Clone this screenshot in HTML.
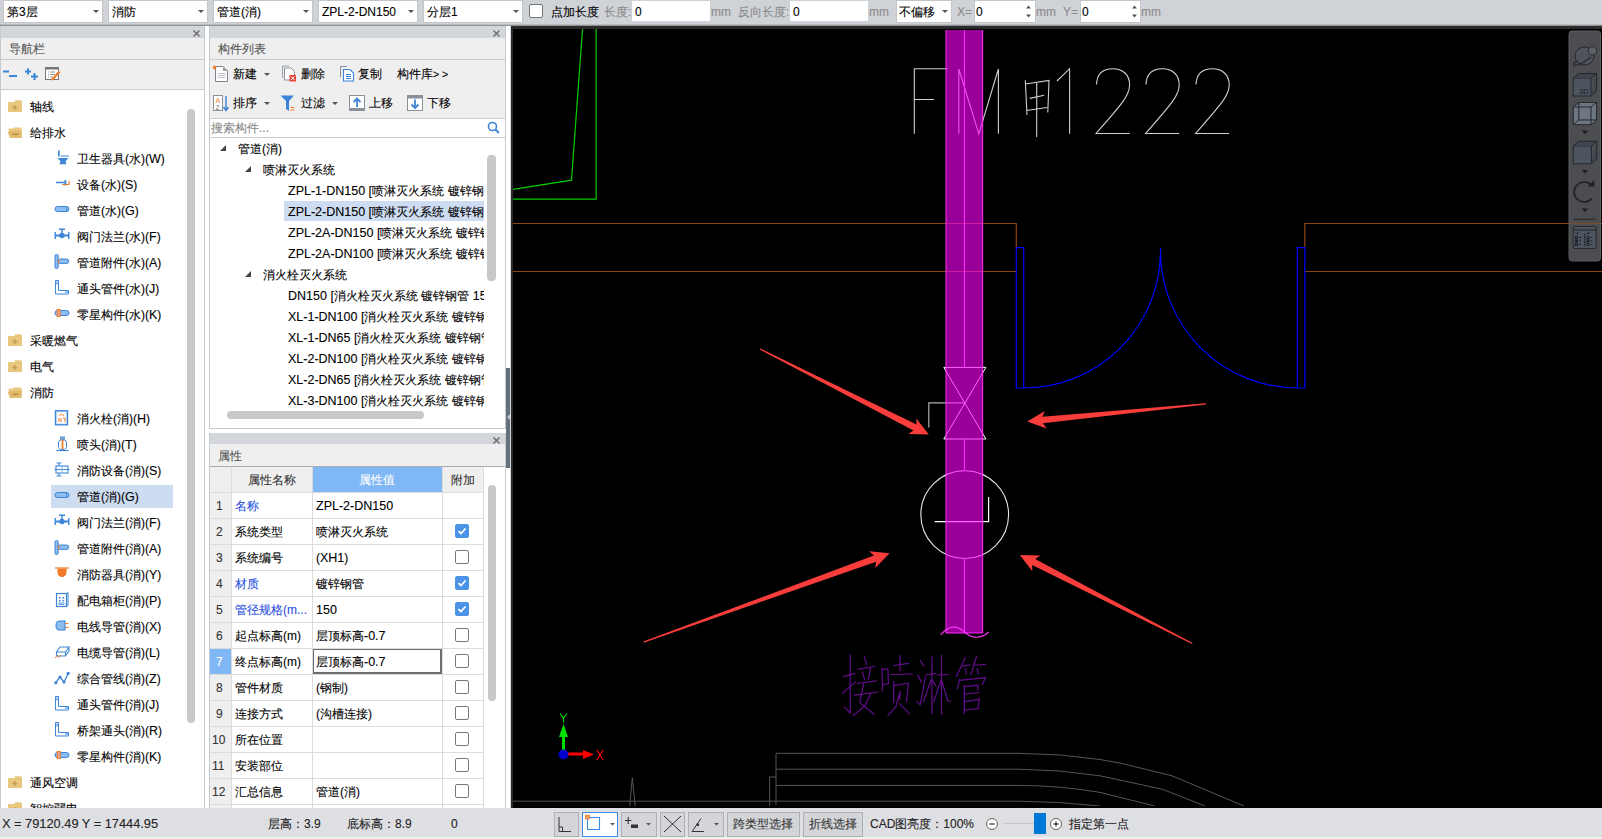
<!DOCTYPE html>
<html><head><meta charset="utf-8">
<style>
*{box-sizing:border-box}
html,body{margin:0;padding:0;width:1602px;height:839px;overflow:hidden;background:#cfd2d7;font-family:"Liberation Sans",sans-serif;font-size:12px;color:#000}
.t,.cb span{-webkit-text-stroke:0.1px currentColor}
.a{position:absolute}
.a svg{display:block}
.t{position:absolute;white-space:nowrap;line-height:14px}
.cb{position:absolute;background:#fff;border:1px solid #c4c6ca;height:23px;top:0}
.cb span{position:absolute;left:3px;top:4px;line-height:14px;white-space:nowrap}
.cb i{position:absolute;right:3px;top:9px;width:0;height:0;border-left:3px solid transparent;border-right:3px solid transparent;border-top:3px solid #555}
.g{color:#8a8a8a}
.l{font-size:12.5px}
.chk{position:absolute;width:14px;height:14px;border:1px solid #6d6d6d;border-radius:2px;background:#fff}
.chk.on{background:#4a93e6;border-color:#4a93e6}
.btn{position:absolute;border:1px solid #a9abae;background:#d0d1d4;top:812px;height:25px}
</style></head><body>

<div class="a" style="left:0;top:24px;width:1602px;height:1px;background:#b9bcc0"></div><div class="a" style="left:0;top:25px;width:1602px;height:1px;background:#8f9297"></div>
<div class="cb" style="left:3px;width:100px"><span>第3层</span><i></i></div>
<div class="cb" style="left:108px;width:100px"><span>消防</span><i></i></div>
<div class="cb" style="left:213px;width:100px"><span>管道(消)</span><i></i></div>
<div class="cb" style="left:318px;width:100px"><span>ZPL-2-DN150</span><i></i></div>
<div class="cb" style="left:423px;width:100px"><span>分层1</span><i></i></div>
<div class="chk" style="left:529px;top:4px;border-color:#777"></div>
<div class="t" style="left:551px;top:5px">点加长度</div>
<div class="t g" style="left:604px;top:5px">长度:</div>
<div class="a" style="left:632px;top:1px;width:78px;height:20px;background:#fff"></div>
<div class="t" style="left:635px;top:5px">0</div>
<div class="t g" style="left:711px;top:5px">mm</div>
<div class="t g" style="left:738px;top:5px">反向长度:</div>
<div class="a" style="left:790px;top:1px;width:78px;height:20px;background:#fff"></div>
<div class="t" style="left:793px;top:5px">0</div>
<div class="t g" style="left:869px;top:5px">mm</div>
<div class="cb" style="left:896px;width:56px"><span style="left:2px">不偏移</span><i></i></div>
<div class="t g" style="left:957px;top:5px">X=</div>
<div class="cb" style="left:974px;width:62px"><span style="left:1px">0</span></div><div class="a" style="left:1025px;top:5px"><svg width="7" height="13" viewBox="0 0 7 13"><path d="M1 3.5 L3.5 0.5 L6 3.5 Z M1 9.5 L3.5 12.5 L6 9.5 Z" fill="#555"/></svg></div>
<div class="t g" style="left:1036px;top:5px">mm</div>
<div class="t g" style="left:1063px;top:5px">Y=</div>
<div class="cb" style="left:1080px;width:61px"><span style="left:1px">0</span></div><div class="a" style="left:1131px;top:5px"><svg width="7" height="13" viewBox="0 0 7 13"><path d="M1 3.5 L3.5 0.5 L6 3.5 Z M1 9.5 L3.5 12.5 L6 9.5 Z" fill="#555"/></svg></div>
<div class="t g" style="left:1141px;top:5px">mm</div>

<div class="a" style="left:0;top:26px;width:205px;height:782px;background:#c5cad0"></div>
<div class="a" style="left:1px;top:26px;width:203px;height:12px;background:#d3d6db"></div>
<div class="a" style="left:1px;top:38px;width:203px;height:21px;background:#efefef"></div>
<div class="t" style="left:9px;top:42px;color:#555">导航栏</div>
<div class="a" style="left:1px;top:60px;width:203px;height:29px;background:#efefef"></div>
<div class="a" style="left:1px;top:90px;width:203px;height:718px;background:#fff"></div>
<div class="a" style="left:187px;top:109px;width:8px;height:614px;background:#c8c8c8;border-radius:4px"></div>
<div class="a" style="left:7px;top:99px"><svg width="16" height="14" viewBox="0 0 16 14"><path d="M1 3 L1 13 L15 13 L15 3 Z" fill="#e9c77f"/><path d="M8 1.2 L14 1.2 L15 3 L7.5 3 Z" fill="#e9c77f"/><rect x="7" y="6" width="1.6" height="5" fill="#c79f55"/><rect x="5.3" y="7.7" width="5" height="1.6" fill="#c79f55"/></svg></div>
<div class="t" style="left:30px;top:100px">轴线</div>
<div class="a" style="left:7px;top:125px"><svg width="16" height="14" viewBox="0 0 16 14"><path d="M1.5 3.5 L6 3.5 L7 2.5 L14.5 2.5 L14.5 13 L3 13 Z" fill="#e9c77f"/><path d="M0.5 6.5 L15 5.5 L14.5 13 L3 13 Z" fill="#e3bb6c"/><rect x="5.5" y="8.5" width="6" height="1.6" fill="#b89044"/></svg></div>
<div class="t" style="left:30px;top:126px">给排水</div>
<div class="a" style="left:54px;top:150px"><svg width="16" height="16" viewBox="0 0 16 16"><path d="M4 0.5 h1.6 v6 h-1.6z M6.5 5.5 h8.5 v1.1 h-8.5z" fill="#3d85d8"/><path d="M3.5 8 H14.5 L11.5 11.3 L12.5 14.3 H5.5 L6.5 11.3 Z" fill="#3d85d8"/></svg></div>
<div class="t" style="left:77px;top:152px">卫生器具(水)(<span class="l">W</span>)</div>
<div class="a" style="left:54px;top:176px"><svg width="16" height="16" viewBox="0 0 16 16"><path d="M2 5.7 h9 v1.6 h-9z M10.5 4 h1.8 v5.5 h-1.8z" fill="#3d85d8"/><path d="M8 8.5 H15 V5" stroke="#f07a28" stroke-width="1.2" fill="none"/></svg></div>
<div class="t" style="left:77px;top:178px">设备(水)(<span class="l">S</span>)</div>
<div class="a" style="left:54px;top:202px"><svg width="16" height="16" viewBox="0 0 16 16"><rect x="1" y="4.5" width="14" height="5" rx="2.5" fill="#8cbcf0" stroke="#3d85d8" stroke-width="1"/><path d="M12.5 4.5 v5" stroke="#3d85d8" stroke-width="0.8"/></svg></div>
<div class="t" style="left:77px;top:204px">管道(水)(<span class="l">G</span>)</div>
<div class="a" style="left:54px;top:228px"><svg width="16" height="16" viewBox="0 0 16 16"><path d="M5 0.5 h6 v1.4 h-6z M7.3 1 h1.4 v4 h-1.4z M1 6.5 h14 v2 h-14z M0.5 4 h1.4 v7 h-1.4z M14.1 4 h1.4 v7 h-1.4z" fill="#3d85d8"/><circle cx="8" cy="7.5" r="2.7" fill="#3d85d8"/></svg></div>
<div class="t" style="left:77px;top:230px">阀门法兰(水)(<span class="l">F</span>)</div>
<div class="a" style="left:54px;top:254px"><svg width="16" height="16" viewBox="0 0 16 16"><rect x="1" y="0.5" width="3.2" height="14" rx="1.5" fill="#8cbcf0" stroke="#3d85d8" stroke-width="1"/><rect x="4.2" y="5" width="10.5" height="4.4" rx="2" fill="#8cbcf0" stroke="#3d85d8" stroke-width="1"/><path d="M4.6 5 v4.4" stroke="#f07a28" stroke-width="1.1"/></svg></div>
<div class="t" style="left:77px;top:256px">管道附件(水)(<span class="l">A</span>)</div>
<div class="a" style="left:54px;top:280px"><svg width="16" height="16" viewBox="0 0 16 16"><path d="M1.5 0.5 h3 v10 h10 v3.5 h-13 z" fill="none" stroke="#3d85d8" stroke-width="1"/><rect x="2" y="1.5" width="2" height="3" fill="#8cbcf0"/><rect x="11" y="11" width="3" height="2.5" fill="#8cbcf0"/></svg></div>
<div class="t" style="left:77px;top:282px">通头管件(水)(<span class="l">J</span>)</div>
<div class="a" style="left:54px;top:306px"><svg width="16" height="16" viewBox="0 0 16 16"><rect x="1" y="4.5" width="14" height="5" rx="2.5" fill="#8cbcf0" stroke="#3d85d8" stroke-width="1"/><rect x="3.2" y="3.5" width="3" height="7" fill="#e8a888" stroke="#f07a28" stroke-width="1"/></svg></div>
<div class="t" style="left:77px;top:308px">零星构件(水)(<span class="l">K</span>)</div>
<div class="a" style="left:7px;top:333px"><svg width="16" height="14" viewBox="0 0 16 14"><path d="M1 3 L1 13 L15 13 L15 3 Z" fill="#e9c77f"/><path d="M8 1.2 L14 1.2 L15 3 L7.5 3 Z" fill="#e9c77f"/><rect x="7" y="6" width="1.6" height="5" fill="#c79f55"/><rect x="5.3" y="7.7" width="5" height="1.6" fill="#c79f55"/></svg></div>
<div class="t" style="left:30px;top:334px">采暖燃气</div>
<div class="a" style="left:7px;top:359px"><svg width="16" height="14" viewBox="0 0 16 14"><path d="M1 3 L1 13 L15 13 L15 3 Z" fill="#e9c77f"/><path d="M8 1.2 L14 1.2 L15 3 L7.5 3 Z" fill="#e9c77f"/><rect x="7" y="6" width="1.6" height="5" fill="#c79f55"/><rect x="5.3" y="7.7" width="5" height="1.6" fill="#c79f55"/></svg></div>
<div class="t" style="left:30px;top:360px">电气</div>
<div class="a" style="left:7px;top:385px"><svg width="16" height="14" viewBox="0 0 16 14"><path d="M1.5 3.5 L6 3.5 L7 2.5 L14.5 2.5 L14.5 13 L3 13 Z" fill="#e9c77f"/><path d="M0.5 6.5 L15 5.5 L14.5 13 L3 13 Z" fill="#e3bb6c"/><rect x="5.5" y="8.5" width="6" height="1.6" fill="#b89044"/></svg></div>
<div class="t" style="left:30px;top:386px">消防</div>
<div class="a" style="left:54px;top:410px"><svg width="16" height="16" viewBox="0 0 16 16"><rect x="1.5" y="0.8" width="12" height="14" fill="#dde9f8" stroke="#3d85d8" stroke-width="1.4"/><rect x="3.5" y="2.5" width="8" height="10.5" fill="#fff"/><path d="M5 5.5 Q7.5 3 10 5.5 M5 8 v4 M7 8 v4 M9 8 h2 v4" stroke="#f07a28" stroke-width="1" fill="none"/></svg></div>
<div class="t" style="left:77px;top:412px">消火栓(消)(<span class="l">H</span>)</div>
<div class="a" style="left:54px;top:436px"><svg width="16" height="16" viewBox="0 0 16 16"><path d="M6 0.5 h5 v1.2 h-5z M6 2.2 h5 v1.2 h-5z" fill="#3d85d8"/><path d="M6 4 L4.5 6 V11.5 L6.5 13.5 H10.5 L12.5 11.5 V6 L11 4 Z" fill="none" stroke="#3d85d8" stroke-width="1"/><rect x="7.6" y="3.5" width="1.8" height="10" fill="#f07a28"/><path d="M2.5 14.5 h12" stroke="#3d85d8" stroke-width="1.2"/></svg></div>
<div class="t" style="left:77px;top:438px">喷头(消)(<span class="l">T</span>)</div>
<div class="a" style="left:54px;top:462px"><svg width="16" height="16" viewBox="0 0 16 16"><path d="M2.5 1 h5 M5 1 v3 M2.5 14 h5 M5 11 v3 M0.5 7.5 h15" stroke="#3d85d8" stroke-width="1.2"/><rect x="2" y="4" width="12" height="7" fill="none" stroke="#3d85d8" stroke-width="1.1"/><rect x="7.5" y="4" width="1.2" height="7" fill="#8cbcf0"/></svg></div>
<div class="t" style="left:77px;top:464px">消防设备(消)(<span class="l">S</span>)</div>
<div class="a" style="left:51px;top:485px;width:122px;height:23px;background:#cddcf1"></div>
<div class="a" style="left:54px;top:488px"><svg width="16" height="16" viewBox="0 0 16 16"><rect x="1" y="4.5" width="14" height="5" rx="2.5" fill="#8cbcf0" stroke="#3d85d8" stroke-width="1"/><path d="M12.5 4.5 v5" stroke="#3d85d8" stroke-width="0.8"/></svg></div>
<div class="t" style="left:77px;top:490px">管道(消)(<span class="l">G</span>)</div>
<div class="a" style="left:54px;top:514px"><svg width="16" height="16" viewBox="0 0 16 16"><path d="M5 0.5 h6 v1.4 h-6z M7.3 1 h1.4 v4 h-1.4z M1 6.5 h14 v2 h-14z M0.5 4 h1.4 v7 h-1.4z M14.1 4 h1.4 v7 h-1.4z" fill="#3d85d8"/><circle cx="8" cy="7.5" r="2.7" fill="#3d85d8"/></svg></div>
<div class="t" style="left:77px;top:516px">阀门法兰(消)(<span class="l">F</span>)</div>
<div class="a" style="left:54px;top:540px"><svg width="16" height="16" viewBox="0 0 16 16"><rect x="1" y="0.5" width="3.2" height="14" rx="1.5" fill="#8cbcf0" stroke="#3d85d8" stroke-width="1"/><rect x="4.2" y="5" width="10.5" height="4.4" rx="2" fill="#8cbcf0" stroke="#3d85d8" stroke-width="1"/><path d="M4.6 5 v4.4" stroke="#f07a28" stroke-width="1.1"/></svg></div>
<div class="t" style="left:77px;top:542px">管道附件(消)(<span class="l">A</span>)</div>
<div class="a" style="left:54px;top:566px"><svg width="16" height="16" viewBox="0 0 16 16"><path d="M1 2 h14" stroke="#f07a28" stroke-width="1.2"/><path d="M3.5 2.5 h9 v4 a4.5 4.5 0 0 1 -9 0 z" fill="#f07a28"/></svg></div>
<div class="t" style="left:77px;top:568px">消防器具(消)(<span class="l">Y</span>)</div>
<div class="a" style="left:54px;top:592px"><svg width="16" height="16" viewBox="0 0 16 16"><rect x="2.5" y="1.5" width="10" height="13" fill="#fff" stroke="#3d85d8" stroke-width="1.2"/><path d="M12.5 1.5 l1.5 -1 v13 l-1.5 1" fill="none" stroke="#3d85d8" stroke-width="1"/><path d="M5 5 h1.6 v1.6 h-1.6z M8.5 5 h1.6 v1.6 h-1.6z M5 8 h1.6 v1.6 h-1.6z M8.5 8 h1.6 v1.6 h-1.6z" fill="#3d85d8"/><rect x="5" y="11" width="5" height="1.5" fill="none" stroke="#3d85d8" stroke-width="0.8"/></svg></div>
<div class="t" style="left:77px;top:594px">配电箱柜(消)(<span class="l">P</span>)</div>
<div class="a" style="left:54px;top:618px"><svg width="16" height="16" viewBox="0 0 16 16"><path d="M5 3 h6 v9 h-6 a3 4.5 0 0 1 0 -9z" fill="#8cbcf0" stroke="#3d85d8" stroke-width="1.1"/><path d="M11 5.5 h3.5 M11 9.5 h3.5" stroke="#f07a28" stroke-width="1.2"/></svg></div>
<div class="t" style="left:77px;top:620px">电线导管(消)(<span class="l">X</span>)</div>
<div class="a" style="left:54px;top:644px"><svg width="16" height="16" viewBox="0 0 16 16"><path d="M2.5 8 L6 3 H15 L11.5 8 Z M2.5 8 V12 H11.5 V8 M11.5 12 L15 7 V3" fill="#fff" stroke="#3d85d8" stroke-width="1.1"/><path d="M1 14 l3 -3 M4 14 l3 -3" stroke="#f07a28" stroke-width="1"/></svg></div>
<div class="t" style="left:77px;top:646px">电缆导管(消)(<span class="l">L</span>)</div>
<div class="a" style="left:54px;top:670px"><svg width="16" height="16" viewBox="0 0 16 16"><path d="M1.5 13 L6 7 L10 12 L14.5 3" fill="none" stroke="#3d85d8" stroke-width="1.3"/><circle cx="1.8" cy="12.8" r="1.6" fill="#3d85d8"/><circle cx="6" cy="7" r="1.6" fill="#3d85d8"/><circle cx="10" cy="12" r="1.6" fill="#3d85d8"/><circle cx="14.2" cy="3.3" r="1.6" fill="#3d85d8"/></svg></div>
<div class="t" style="left:77px;top:672px">综合管线(消)(<span class="l">Z</span>)</div>
<div class="a" style="left:54px;top:696px"><svg width="16" height="16" viewBox="0 0 16 16"><path d="M1.5 0.5 h3 v10 h10 v3.5 h-13 z" fill="none" stroke="#3d85d8" stroke-width="1"/><rect x="2" y="1.5" width="2" height="3" fill="#8cbcf0"/><rect x="11" y="11" width="3" height="2.5" fill="#8cbcf0"/></svg></div>
<div class="t" style="left:77px;top:698px">通头管件(消)(<span class="l">J</span>)</div>
<div class="a" style="left:54px;top:722px"><svg width="16" height="16" viewBox="0 0 16 16"><path d="M1.5 0.5 h3 v10 h10 v3.5 h-13 z" fill="none" stroke="#3d85d8" stroke-width="1"/><rect x="2" y="1.5" width="2" height="3" fill="#8cbcf0"/><rect x="11" y="11" width="3" height="2.5" fill="#8cbcf0"/></svg></div>
<div class="t" style="left:77px;top:724px">桥架通头(消)(<span class="l">R</span>)</div>
<div class="a" style="left:54px;top:748px"><svg width="16" height="16" viewBox="0 0 16 16"><rect x="1" y="4.5" width="14" height="5" rx="2.5" fill="#8cbcf0" stroke="#3d85d8" stroke-width="1"/><rect x="3.2" y="3.5" width="3" height="7" fill="#e8a888" stroke="#f07a28" stroke-width="1"/></svg></div>
<div class="t" style="left:77px;top:750px">零星构件(消)(<span class="l">K</span>)</div>
<div class="a" style="left:7px;top:775px"><svg width="16" height="14" viewBox="0 0 16 14"><path d="M1 3 L1 13 L15 13 L15 3 Z" fill="#e9c77f"/><path d="M8 1.2 L14 1.2 L15 3 L7.5 3 Z" fill="#e9c77f"/><rect x="7" y="6" width="1.6" height="5" fill="#c79f55"/><rect x="5.3" y="7.7" width="5" height="1.6" fill="#c79f55"/></svg></div>
<div class="t" style="left:30px;top:776px">通风空调</div>
<div class="a" style="left:7px;top:801px"><svg width="16" height="14" viewBox="0 0 16 14"><path d="M1 3 L1 13 L15 13 L15 3 Z" fill="#e9c77f"/><path d="M8 1.2 L14 1.2 L15 3 L7.5 3 Z" fill="#e9c77f"/><rect x="7" y="6" width="1.6" height="5" fill="#c79f55"/><rect x="5.3" y="7.7" width="5" height="1.6" fill="#c79f55"/></svg></div>
<div class="t" style="left:30px;top:802px">智控弱电</div>
<div class="a" style="left:0;top:808px;width:210px;height:31px;background:#dedfe2"></div>
<div class="a" style="left:205px;top:26px;width:4px;height:782px;background:#fff"></div>
<div class="a" style="left:209px;top:26px;width:297px;height:403px;background:#c5cad0"></div>
<div class="a" style="left:210px;top:26px;width:295px;height:12px;background:#d3d6db"></div>
<div class="a" style="left:210px;top:38px;width:295px;height:21px;background:#efefef"></div>
<div class="t" style="left:218px;top:42px;color:#555">构件列表</div>
<div class="a" style="left:210px;top:60px;width:295px;height:58px;background:#efefef"></div>
<div class="a" style="left:210px;top:119px;width:295px;height:18px;background:#fff"></div>
<div class="t" style="left:211px;top:121px;color:#8a8a8a">搜索构件...</div>
<div class="a" style="left:210px;top:138px;width:295px;height:290px;background:#fff"></div>
<div class="a" style="left:210px;top:138px;width:274px;height:272px;overflow:hidden">
<div class="a" style="left:10px;top:7px;width:0;height:0;border-left:6px solid transparent;border-bottom:6px solid #444"></div>
<div class="t" style="left:28px;top:4px">管道(消)</div>
<div class="a" style="left:35px;top:28px;width:0;height:0;border-left:6px solid transparent;border-bottom:6px solid #444"></div>
<div class="t" style="left:53px;top:25px">喷淋灭火系统</div>
<div class="t" style="left:78px;top:46px"><span class="l">ZPL-1-DN150 [</span>喷淋灭火系统<span class="l"> </span>镀锌钢管</div>
<div class="a" style="left:74px;top:63px;width:200px;height:20px;background:#cddcf1"></div>
<div class="t" style="left:78px;top:67px"><span class="l">ZPL-2-DN150 [</span>喷淋灭火系统<span class="l"> </span>镀锌钢管</div>
<div class="t" style="left:78px;top:88px"><span class="l">ZPL-2A-DN150 [</span>喷淋灭火系统<span class="l"> </span>镀锌钢管</div>
<div class="t" style="left:78px;top:109px"><span class="l">ZPL-2A-DN100 [</span>喷淋灭火系统<span class="l"> </span>镀锌钢管</div>
<div class="a" style="left:35px;top:133px;width:0;height:0;border-left:6px solid transparent;border-bottom:6px solid #444"></div>
<div class="t" style="left:53px;top:130px">消火栓灭火系统</div>
<div class="t" style="left:78px;top:151px"><span class="l">DN150 [</span>消火栓灭火系统<span class="l"> </span>镀锌钢管<span class="l"> 150</span></div>
<div class="t" style="left:78px;top:172px"><span class="l">XL-1-DN100 [</span>消火栓灭火系统<span class="l"> </span>镀锌钢管</div>
<div class="t" style="left:78px;top:193px"><span class="l">XL-1-DN65 [</span>消火栓灭火系统<span class="l"> </span>镀锌钢管</div>
<div class="t" style="left:78px;top:214px"><span class="l">XL-2-DN100 [</span>消火栓灭火系统<span class="l"> </span>镀锌钢管</div>
<div class="t" style="left:78px;top:235px"><span class="l">XL-2-DN65 [</span>消火栓灭火系统<span class="l"> </span>镀锌钢管</div>
<div class="t" style="left:78px;top:256px"><span class="l">XL-3-DN100 [</span>消火栓灭火系统<span class="l"> </span>镀锌钢管</div>
</div>
<div class="a" style="left:487px;top:155px;width:9px;height:126px;background:#c8c8c8;border-radius:4px"></div>
<div class="a" style="left:227px;top:411px;width:197px;height:8px;background:#c8c8c8;border-radius:4px"></div>
<div class="a" style="left:209px;top:433px;width:297px;height:375px;background:#c5cad0"></div>
<div class="a" style="left:209px;top:429px;width:297px;height:4px;background:#fff"></div>
<div class="a" style="left:210px;top:433px;width:295px;height:11px;background:#d3d6db"></div>
<div class="a" style="left:210px;top:444px;width:295px;height:22px;background:#efefef"></div>
<div class="t" style="left:218px;top:449px;color:#555">属性</div>
<div class="a" style="left:210px;top:466px;width:295px;height:1px;background:#a9acb0"></div>
<div class="a" style="left:210px;top:467px;width:295px;height:341px;background:#fff"></div>
<div class="a" style="left:210px;top:467px;width:21px;height:341px;background:#efefef"></div>
<div class="a" style="left:231px;top:467px;width:252px;height:25px;background:#efefef"></div>
<div class="a" style="left:312px;top:467px;width:131px;height:25px;background:#7fb8f5"></div>
<div class="t" style="left:248px;top:473px;color:#333">属性名称</div>
<div class="t" style="left:359px;top:473px;color:#fff">属性值</div>
<div class="t" style="left:451px;top:473px;color:#333">附加</div>
<div class="t" style="left:216px;top:499px;color:#333">1</div>
<div class="t" style="left:235px;top:499px;color:#2a50e0">名称</div>
<div class="t" style="left:316px;top:499px"><span class="l">ZPL-2-DN150</span></div>
<div class="t" style="left:216px;top:525px;color:#333">2</div>
<div class="t" style="left:235px;top:525px;color:#000">系统类型</div>
<div class="t" style="left:316px;top:525px">喷淋灭火系统</div>
<div class="chk on" style="left:455px;top:524px;border-color:#4a93e6"><svg width="12" height="12" viewBox="0 0 12 12" style="display:block"><path d="M2.5 6.2 L5 8.5 L9.5 3.5" stroke="#fff" stroke-width="1.8" fill="none"/></svg></div>
<div class="t" style="left:216px;top:551px;color:#333">3</div>
<div class="t" style="left:235px;top:551px;color:#000">系统编号</div>
<div class="t" style="left:316px;top:551px">(<span class="l">XH1</span>)</div>
<div class="chk" style="left:455px;top:550px;border-color:#777"></div>
<div class="t" style="left:216px;top:577px;color:#333">4</div>
<div class="t" style="left:235px;top:577px;color:#2a50e0">材质</div>
<div class="t" style="left:316px;top:577px">镀锌钢管</div>
<div class="chk on" style="left:455px;top:576px;border-color:#4a93e6"><svg width="12" height="12" viewBox="0 0 12 12" style="display:block"><path d="M2.5 6.2 L5 8.5 L9.5 3.5" stroke="#fff" stroke-width="1.8" fill="none"/></svg></div>
<div class="t" style="left:216px;top:603px;color:#333">5</div>
<div class="t" style="left:235px;top:603px;color:#2a50e0">管径规格(m...</div>
<div class="t" style="left:316px;top:603px"><span class="l">150</span></div>
<div class="chk on" style="left:455px;top:602px;border-color:#4a93e6"><svg width="12" height="12" viewBox="0 0 12 12" style="display:block"><path d="M2.5 6.2 L5 8.5 L9.5 3.5" stroke="#fff" stroke-width="1.8" fill="none"/></svg></div>
<div class="t" style="left:216px;top:629px;color:#333">6</div>
<div class="t" style="left:235px;top:629px;color:#000">起点标高(m)</div>
<div class="t" style="left:316px;top:629px">层顶标高<span class="l">-0.7</span></div>
<div class="chk" style="left:455px;top:628px;border-color:#777"></div>
<div class="a" style="left:210px;top:648px;width:21px;height:26px;background:#7fb8f5"></div>
<div class="a" style="left:312px;top:648px;width:130px;height:26px;border:2px solid #6e6e6e"></div>
<div class="t" style="left:216px;top:655px;color:#fff">7</div>
<div class="t" style="left:235px;top:655px;color:#000">终点标高(m)</div>
<div class="t" style="left:316px;top:655px">层顶标高<span class="l">-0.7</span></div>
<div class="chk" style="left:455px;top:654px;border-color:#777"></div>
<div class="t" style="left:216px;top:681px;color:#333">8</div>
<div class="t" style="left:235px;top:681px;color:#000">管件材质</div>
<div class="t" style="left:316px;top:681px">(钢制)</div>
<div class="chk" style="left:455px;top:680px;border-color:#777"></div>
<div class="t" style="left:216px;top:707px;color:#333">9</div>
<div class="t" style="left:235px;top:707px;color:#000">连接方式</div>
<div class="t" style="left:316px;top:707px">(沟槽连接)</div>
<div class="chk" style="left:455px;top:706px;border-color:#777"></div>
<div class="t" style="left:212px;top:733px;color:#333">10</div>
<div class="t" style="left:235px;top:733px;color:#000">所在位置</div>
<div class="t" style="left:316px;top:733px"></div>
<div class="chk" style="left:455px;top:732px;border-color:#777"></div>
<div class="t" style="left:212px;top:759px;color:#333">11</div>
<div class="t" style="left:235px;top:759px;color:#000">安装部位</div>
<div class="t" style="left:316px;top:759px"></div>
<div class="chk" style="left:455px;top:758px;border-color:#777"></div>
<div class="t" style="left:212px;top:785px;color:#333">12</div>
<div class="t" style="left:235px;top:785px;color:#000">汇总信息</div>
<div class="t" style="left:316px;top:785px">管道(消)</div>
<div class="chk" style="left:455px;top:784px;border-color:#777"></div>
<div class="a" style="left:210px;top:492px;width:273px;height:1px;background:#dcdcdc"></div>
<div class="a" style="left:210px;top:518px;width:273px;height:1px;background:#dcdcdc"></div>
<div class="a" style="left:210px;top:544px;width:273px;height:1px;background:#dcdcdc"></div>
<div class="a" style="left:210px;top:570px;width:273px;height:1px;background:#dcdcdc"></div>
<div class="a" style="left:210px;top:596px;width:273px;height:1px;background:#dcdcdc"></div>
<div class="a" style="left:210px;top:622px;width:273px;height:1px;background:#dcdcdc"></div>
<div class="a" style="left:210px;top:648px;width:273px;height:1px;background:#dcdcdc"></div>
<div class="a" style="left:210px;top:674px;width:273px;height:1px;background:#dcdcdc"></div>
<div class="a" style="left:210px;top:700px;width:273px;height:1px;background:#dcdcdc"></div>
<div class="a" style="left:210px;top:726px;width:273px;height:1px;background:#dcdcdc"></div>
<div class="a" style="left:210px;top:752px;width:273px;height:1px;background:#dcdcdc"></div>
<div class="a" style="left:210px;top:778px;width:273px;height:1px;background:#dcdcdc"></div>
<div class="a" style="left:210px;top:804px;width:273px;height:1px;background:#dcdcdc"></div>
<div class="a" style="left:231px;top:467px;width:1px;height:341px;background:#dcdcdc"></div>
<div class="a" style="left:312px;top:467px;width:1px;height:341px;background:#dcdcdc"></div>
<div class="a" style="left:442px;top:467px;width:1px;height:341px;background:#dcdcdc"></div>
<div class="a" style="left:483px;top:467px;width:1px;height:341px;background:#dcdcdc"></div>
<div class="a" style="left:488px;top:485px;width:8px;height:216px;background:#c8c8c8;border-radius:4px"></div>
<div class="a" style="left:192px;top:29px"><svg width="9" height="9" viewBox="0 0 9 9"><path d="M1.5 1.5 L7.5 7.5 M7.5 1.5 L1.5 7.5" stroke="#6b6b6b" stroke-width="1.4"/></svg></div>
<div class="a" style="left:492px;top:29px"><svg width="9" height="9" viewBox="0 0 9 9"><path d="M1.5 1.5 L7.5 7.5 M7.5 1.5 L1.5 7.5" stroke="#6b6b6b" stroke-width="1.4"/></svg></div>
<div class="a" style="left:492px;top:436px"><svg width="9" height="9" viewBox="0 0 9 9"><path d="M1.5 1.5 L7.5 7.5 M7.5 1.5 L1.5 7.5" stroke="#6b6b6b" stroke-width="1.4"/></svg></div>
<div class="a" style="left:2px;top:67px"><svg width="60" height="15" viewBox="0 0 60 15"><path d="M1 4.5 h6 M7 9 h8" stroke="#3d85d8" stroke-width="2"/><path d="M23 4.5 h6 M26 1.5 v6 M29 9.5 h7 M32.5 6 v7" stroke="#3d85d8" stroke-width="2"/><rect x="43.5" y="0.5" width="13" height="12" fill="#fff" stroke="#777" stroke-width="1"/><rect x="43.5" y="0.5" width="13" height="2" fill="#777"/><path d="M46 5 h1 M48 5 h5 M46 7.5 h1 M48 7.5 h5 M46 10 h1 M48 10 h3" stroke="#888" stroke-width="0.9"/><path d="M50 13 L57.5 4.5" stroke="#f07a28" stroke-width="2.2"/></svg></div>
<div class="a" style="left:212px;top:65px"><svg width="17" height="17" viewBox="0 0 17 17"><path d="M3.5 1.5 H11 L15.5 6 V16.5 H3.5 Z" fill="#fff" stroke="#7d8490" stroke-width="1"/><path d="M11 1.5 V6 H15.5" fill="#9aa0a8"/><path d="M5.5 8.5 h8 M5.5 10.5 h8 M5.5 12.5 h8" stroke="#c0c4cc" stroke-width="1"/><path d="M1 1 l3 3 M4 1 l-3 3 M2.5 0.5 v4 M0.5 2.5 h4" stroke="#f07a28" stroke-width="0.9"/></svg></div>
<div class="t" style="left:233px;top:67px">新建</div>
<div class="a" style="left:264px;top:73px;width:0;height:0;border-left:3.5px solid transparent;border-right:3.5px solid transparent;border-top:3.5px solid #555"></div>
<div class="a" style="left:281px;top:65px"><svg width="17" height="17" viewBox="0 0 17 17"><path d="M1.5 1 H8 M1.5 1 V13" stroke="#9aa0a8" stroke-width="1" fill="none"/><path d="M3.5 3 H10 L13.5 6.5 V15 H3.5 Z" fill="#fff" stroke="#8a9099" stroke-width="1"/><rect x="8.5" y="10" width="6.5" height="6.5" fill="#e8443a"/><path d="M10 11.5 l3.5 3.5 M13.5 11.5 l-3.5 3.5" stroke="#fff" stroke-width="1"/></svg></div>
<div class="t" style="left:301px;top:67px">删除</div>
<div class="a" style="left:339px;top:65px"><svg width="17" height="17" viewBox="0 0 17 17"><path d="M1.5 12 V1.5 H8" stroke="#8a9099" stroke-width="1" fill="none"/><path d="M4.5 4.5 H11 L14.5 8 V16 H4.5 Z" fill="#fff" stroke="#3d85d8" stroke-width="1.1"/><path d="M7 9.5 h5 M7 11.5 h5 M7 13.5 h5" stroke="#3d85d8" stroke-width="1"/></svg></div>
<div class="t" style="left:358px;top:67px">复制</div>
<div class="t" style="left:397px;top:67px">构件库<span style="font-size:10.5px">&gt; &gt;</span></div>
<div class="a" style="left:213px;top:95px"><svg width="17" height="17" viewBox="0 0 17 17"><rect x="0.5" y="0.5" width="9" height="15" fill="#fff" stroke="#8a9099"/><text x="2.5" y="7.5" font-size="7" fill="#f07a28" font-family="Liberation Sans">A</text><text x="2.5" y="14.5" font-size="7" fill="#777" font-family="Liberation Sans">Z</text><path d="M13 1 V15 M10.5 12 L13 15.5 L15.5 12" stroke="#3d85d8" stroke-width="1.4" fill="none"/></svg></div>
<div class="t" style="left:233px;top:96px">排序</div>
<div class="a" style="left:264px;top:102px;width:0;height:0;border-left:3.5px solid transparent;border-right:3.5px solid transparent;border-top:3.5px solid #555"></div>
<div class="a" style="left:280px;top:95px"><svg width="17" height="17" viewBox="0 0 17 17"><path d="M0.5 0.5 H14 L9 6 V16 L6 14 V6 Z" fill="#3d85d8"/><path d="M10.5 12.5 h4 M10.5 15 h4" stroke="#f07a28" stroke-width="1.1"/></svg></div>
<div class="t" style="left:301px;top:96px">过滤</div>
<div class="a" style="left:332px;top:102px;width:0;height:0;border-left:3.5px solid transparent;border-right:3.5px solid transparent;border-top:3.5px solid #555"></div>
<div class="a" style="left:349px;top:95px"><svg width="16" height="17" viewBox="0 0 16 17"><rect x="0.5" y="0.5" width="15" height="15" fill="#fff" stroke="#8a9099"/><rect x="0.5" y="13" width="15" height="3" fill="#8a9099"/><path d="M8 12 V3.5 M4.5 7 L8 3.5 L11.5 7" stroke="#3d85d8" stroke-width="1.8" fill="none"/></svg></div>
<div class="t" style="left:369px;top:96px">上移</div>
<div class="a" style="left:407px;top:95px"><svg width="16" height="17" viewBox="0 0 16 17"><rect x="0.5" y="0.5" width="15" height="15" fill="#fff" stroke="#8a9099"/><rect x="0.5" y="0.5" width="15" height="3" fill="#8a9099"/><path d="M8 4.5 V13 M4.5 9.5 L8 13 L11.5 9.5" stroke="#3d85d8" stroke-width="1.8" fill="none"/></svg></div>
<div class="t" style="left:427px;top:96px">下移</div>
<div class="a" style="left:210px;top:118px;width:295px;height:1px;background:#c9ccd0"></div>
<div class="a" style="left:210px;top:137px;width:295px;height:1px;background:#c9ccd0"></div>
<div class="a" style="left:487px;top:121px"><svg width="13" height="13" viewBox="0 0 13 13"><circle cx="5.5" cy="5.5" r="4" fill="none" stroke="#3d85d8" stroke-width="1.6"/><path d="M8.5 8.5 L12 12" stroke="#3d85d8" stroke-width="2"/></svg></div>
<div class="a" style="left:1px;top:59px;width:203px;height:1px;background:#c9ccd0"></div>
<div class="a" style="left:1px;top:89px;width:203px;height:1px;background:#c9ccd0"></div>
<div class="a" style="left:210px;top:59px;width:295px;height:1px;background:#c9ccd0"></div>
<div class="a" style="left:506px;top:26px;width:4px;height:782px;background:#fff"></div>
<div class="a" style="left:510px;top:26px;width:1px;height:782px;background:#d0d5da"></div><div class="a" style="left:511px;top:26px;width:1091px;height:782px;background:#000;border-left:2px solid #2b2b2b;border-top:3px solid #2b2b2b"></div><div class="a" style="left:506px;top:368px;width:4px;height:100px;background:#66707c"></div><div class="a" style="left:507px;top:414px;width:0;height:0;border-right:3px solid #c3c7cc;border-top:3.5px solid transparent;border-bottom:3.5px solid transparent"></div>
<svg class="a" style="left:0;top:0" width="1602" height="839" viewBox="0 0 1602 839">
<defs><clipPath id="cv"><rect x="513" y="29" width="1089" height="777"/></clipPath></defs>
<g clip-path="url(#cv)" fill="none">
<path d="M582.6 28 L571.5 180.2 L512 189.5" stroke="#00d000" stroke-width="1.2"/>
<path d="M596.2 28 V199.2 H512" stroke="#00d000" stroke-width="1.2"/>
<path d="M512 223.5 H1016.3 V247.7" stroke="#8b4513" stroke-width="1.2"/>
<path d="M512 271.5 H1016.3" stroke="#8b4513" stroke-width="1.2"/>
<path d="M1304.8 247.7 V223.5 H1602" stroke="#8b4513" stroke-width="1.2"/>
<path d="M1304.8 271.5 H1602" stroke="#8b4513" stroke-width="1.2"/>
<path d="M1016.3 247.7 H1023.7 V388 H1016.3 Z M1297.3 247.7 H1304.8 V388 H1297.3 Z" stroke="#0000ff" stroke-width="1.2"/>
<path d="M1023.7 388 A137 137 0 0 0 1160.5 251 L1160.5 247.7 L1160.5 251 A137 137 0 0 0 1297.3 388" stroke="#0000ff" stroke-width="1.2"/>
<g stroke="#555555" stroke-width="1">
<path d="M513 801.2 H1018 Q1060 801.5 1100 806"/>
<path d="M776 805 V753.3 H1018 Q1060 753.5 1100 759.5 L1120 763 L1172 775.8 L1244 806"/>
<path d="M776 769.2 H1018 Q1060 769.5 1100 775.8 L1162.7 789.3 L1205 806"/>
<path d="M776 785.4 H1018 Q1060 785.5 1100 792.4 L1154.9 806"/>
<path d="M769.7 806 V777 H776"/>
<path d="M629.7 806 L632.3 777.6 L635.2 806"/>
</g>
<path d="M943.8 367.4 H985.9 L943.8 439 H985.9 Z" stroke="#ffffff" stroke-width="1"/>
<path d="M928.8 427.6 V402.8 H964.5" stroke="#b0b0b0" stroke-width="1.2"/>
<circle cx="964.7" cy="514.6" r="43.9" stroke="#e6e6e6" stroke-width="1.1"/>
<path d="M934.7 521.6 H988.6 V497" stroke="#ffffff" stroke-width="1.2"/>
<g stroke="#d0d0d0" stroke-width="1.1" stroke-linecap="butt">
<path d="M914.3 133.8 V68.7 H948 M914.3 99.5 H934.1"/>
<path d="M958.8 133.8 V69 L978.8 133.8 L998.4 69 V133.8"/>
<path d="M1025.3 80.2 L1027 115 M1025.3 84 L1049 80.5 L1047.8 112.4 M1029.8 98.4 L1044.2 95.2 M1026.5 110.5 L1047.1 107.5 M1036.7 83 V137"/>
<path d="M1057 81 L1069.6 68.7 V133.8"/>
<path d="M1096.5 84.5 C1097 72 1105 68.7 1113 68.7 C1122 68.7 1129.6 74 1129.6 85 C1129.6 96 1120 106 1096 133.5 H1129.6"/>
<path d="M1146 84.5 C1146.5 72 1154.5 68.7 1162.5 68.7 C1171.5 68.7 1179.2 74 1179.2 85 C1179.2 96 1169.5 106 1145.5 133.5 H1179.2"/>
<path d="M1196 84.5 C1196.5 72 1204.5 68.7 1212.5 68.7 C1221.5 68.7 1229.2 74 1229.2 85 C1229.2 96 1219.5 106 1195.5 133.5 H1229.2"/>
</g>
<rect x="946" y="30" width="36.7" height="603" fill="rgba(255,0,255,0.6)"/>
<path d="M946 30 V633 H982.7 V30 M964.5 30 V367.4 M964.5 439 V470.5 M964.5 558.5 V633" stroke="#ff30ff" stroke-width="1"/>
<path d="M940.6 634.9 C950 624 958 626 964.5 632 C971 638 980 640 988.6 632" stroke="#ff30ff" stroke-width="1.1"/>
<path d="M843.3 676.6 L854.9 673.4 M850.2 654.9 L850.2 713.2 L844.3 706.9 M842.2 693.6 L855.5 681.9 M864.0 655.9 L866.6 664.4 M858.1 669.2 L874.6 666.5 M862.4 671.8 L864.5 679.3 M870.3 668.1 L868.4 679.3 M857.1 683.5 L876.2 680.9 M854.4 695.2 L877.8 692.0 M864.0 681.9 L859.7 702.6 L874.1 714.3 M870.9 693.1 L865.0 705.8 L852.8 715.9 M882.0 668.7 L882.5 691.0 M881.5 669.7 L887.9 668.7 L888.4 683.5 L883.1 684.6 M900.1 655.4 L900.1 670.8 M893.7 665.5 L908.6 663.4 M890.5 674.5 L912.3 674.0 M893.7 681.4 L893.7 702.6 M893.7 685.6 L908.6 683.0 L906.4 701.6 M900.1 691.0 L899.5 699.4 M899.5 693.1 L895.8 706.9 L887.9 715.4 M899.5 703.7 L909.6 713.8 M920.2 660.2 L923.9 666.0 M917.6 675.0 L921.3 681.9 M917.0 701.6 L920.2 704.8 L925.5 677.2 M925.5 675.0 L935.6 673.4 M931.9 656.5 L931.9 713.2 M931.4 679.3 L923.4 701.6 M932.4 680.3 L936.2 686.2 M937.2 675.0 L948.4 674.5 M941.5 655.4 L941.5 714.3 M941.5 679.3 L933.5 702.1 M942.0 681.4 L947.8 701.0 L950.5 701.4 M965.4 657.5 L956.3 676.6 M961.1 666.5 L969.6 664.9 M965.4 668.7 L966.4 674.0 M976.5 656.5 L970.7 675.0 M973.3 665.5 L985.5 664.4 M977.0 668.7 L978.6 674.0 M959.5 679.3 L957.4 688.8 M959.0 680.3 L985.5 677.7 L982.3 684.6 M964.3 685.6 L964.3 713.2 M964.3 686.7 L978.1 685.1 L977.6 689.9 M964.3 694.1 L979.2 692.5 M979.2 697.9 L978.1 709.0 M964.3 701.6 L979.2 699.4 M964.3 710.1 L978.1 708.5" stroke="#640c8e" stroke-width="1.2" fill="none" stroke-linecap="round" stroke-linejoin="round"/>
<path d="M563.5 754 V736" stroke="#00e000" stroke-width="3"/>
<path d="M563.5 724 L559 737 H568 Z" fill="#00e000"/>
<path d="M563.5 754 H585" stroke="#ff0000" stroke-width="3"/>
<path d="M594 754.5 L583 750 V759 Z" fill="#ff0000"/>
<circle cx="563.5" cy="754.5" r="5" fill="#0000cc"/>
<path d="M560 713.5 L563.5 718 L567 713.5 M563.5 718 V722.5" stroke="#00e000" stroke-width="1.2"/>
<path d="M597 750 L603 760 M603 750 L597 760" stroke="#ff0000" stroke-width="1.2"/>
<path d="M759.7 349.5 L913.5 430.5 L908.3 434.1 L928.8 434.6 L916.3 418.4 L916.5 424.6 L760.3 348.5 Z" fill="#f83d3a"/>
<path d="M1205.8 403.2 L1042.4 416.7 L1044.8 410.9 L1027.3 421.5 L1046.6 428.4 L1043.0 423.3 L1206.0 404.4 Z" fill="#f83d3a"/>
<path d="M643.7 642.7 L876.1 561.7 L875.2 567.9 L889.6 553.3 L869.2 551.3 L873.9 555.5 L643.3 641.5 Z" fill="#f83d3a"/>
<path d="M1192.6 643.0 L1035.2 559.1 L1040.4 555.6 L1019.9 555.0 L1032.3 571.3 L1032.2 565.0 L1192.0 644.0 Z" fill="#f83d3a"/>
</g>
</svg>
<svg class="a" style="left:1566px;top:28px" width="36" height="240" viewBox="1566 28 36 240">
<rect x="1569" y="31" width="31.5" height="230" rx="3" fill="#4b4d51" stroke="#5b5d61" stroke-width="1"/>
<path d="M1569.5 223.4 H1600.5" stroke="#7a5030" stroke-width="1"/>
<g stroke="#25272a" stroke-width="1">
<ellipse cx="1584.5" cy="56" rx="9.5" ry="9" fill="#50545a"/>
<path d="M1576.5 61 C1570 66 1575 67 1584 62 L1591 57" fill="none" stroke-width="1.2"/>
<circle cx="1592.5" cy="50.8" r="4.2" fill="#5c6168"/>
<path d="M1573.3 78 H1591 V96 H1573.3 Z" fill="#4c5560"/>
<path d="M1573.3 78 L1578.5 73.6 H1596.5 L1591 78 M1596.5 73.6 V91 L1591 96" fill="#3f4650"/>
<path d="M1573.3 107 L1578.8 102.5 H1596.5 V120 L1591 124.7 H1573.3 Z" fill="#6d7784"/><path d="M1573.3 107 H1591 V124.7 M1591 107 L1596.5 102.5 M1578.8 102.5 V120 H1596.5 M1578.8 120 L1573.3 124.7" fill="none"/>
<path d="M1573.3 146 H1591.4 V163.8 H1573.3 Z" fill="#4c5560"/>
<path d="M1573.3 146 L1578.5 141.3 H1596.7 L1591.4 146 M1596.7 141.3 V158.5 L1591.4 163.8" fill="#3f4650"/>
<path d="M1574 219.3 H1596" stroke="#25272a"/>
<rect x="1573.2" y="226.5" width="23" height="22" rx="1.5" fill="#4c5560"/>
<path d="M1573.2 230 H1596.2 M1584.7 234 V246" />
</g>
<text x="1579" y="94" font-size="7.5" fill="#1e2024" font-family="Liberation Sans">3D</text>
<path d="M1591.7 185.6 A10 10 0 1 0 1591.7 198.4" fill="none" stroke="#1e2024" stroke-width="1.6"/>
<path d="M1587.5 186.5 L1594.5 186.5 L1594 180 Z" fill="#1e2024"/>
<path d="M1581.5 130.5 H1588.5 L1585 134 Z M1581.5 170 H1588.5 L1585 173.5 Z M1581.5 208.5 H1588.5 L1585 212 Z" fill="#1e2024"/>
<g stroke="#1e2024" stroke-width="1" fill="none">
<path d="M1575.5 233 l1.2 1.2 l2 -2.4 M1586.5 233 l1.2 1.2 l2 -2.4"/>
<rect x="1575.5" y="236.5" width="2" height="2"/><rect x="1575.5" y="240" width="2" height="2"/><rect x="1575.5" y="243.5" width="2" height="2"/>
<rect x="1587" y="236.5" width="2" height="2"/><rect x="1587" y="240" width="2" height="2"/><rect x="1587" y="243.5" width="2" height="2"/>
<path d="M1579 237.5 h2 M1579 241 h2 M1579 244.5 h2 M1590.5 237.5 h2 M1590.5 241 h2 M1590.5 244.5 h2"/>
</g>
</svg>

<div class="a" style="left:0;top:808px;width:1602px;height:29px;background:#dedfe2"></div>
<div class="a" style="left:0;top:837px;width:1602px;height:2px;background:#f0f0f0"></div>
<div class="t" style="left:2px;top:817px;font-size:12.8px;color:#222">X = 79120.49 Y = 17444.95</div>
<div class="t" style="left:268px;top:817px;color:#222">层高：3.9</div>
<div class="t" style="left:347px;top:817px;color:#222">底标高：8.9</div>
<div class="t" style="left:451px;top:817px;color:#222">0</div>
<div class="a" style="left:554px;top:812px;width:25px;height:25px;background:#d4d5d8;border:1px solid #aeb0b3"></div>
<div class="a" style="left:582px;top:812px;width:36px;height:25px;background:#fff;border:1px solid #3a8ee6"></div>
<div class="a" style="left:621px;top:812px;width:36px;height:25px;background:#d4d5d8;border:1px solid #aeb0b3"></div>
<div class="a" style="left:660px;top:812px;width:25px;height:25px;background:#d4d5d8;border:1px solid #aeb0b3"></div>
<div class="a" style="left:688px;top:812px;width:36px;height:25px;background:#d4d5d8;border:1px solid #aeb0b3"></div>
<div class="a" style="left:727px;top:812px;width:73px;height:25px;background:#d4d5d8;border:1px solid #aeb0b3"></div>
<div class="a" style="left:803px;top:812px;width:60px;height:25px;background:#d4d5d8;border:1px solid #aeb0b3"></div>
<div class="a" style="left:554px;top:812px"><svg width="170" height="25" viewBox="554 812 170 25"><path d="M559 817 V831.5 H571 M559 827 H562.5 V831.5" stroke="#333" stroke-width="1" fill="none"/><rect x="587.5" y="817.5" width="12" height="12" fill="none" stroke="#3a8ee6" stroke-width="1.1"/><rect x="585.5" y="815" width="4" height="4" fill="#f7a05a" stroke="#e0702a" stroke-width="0.6"/><path d="M610 823 h5 l-2.5 2.5z" fill="#555"/><path d="M625 820.5 h6.5 M628.2 817 v7" stroke="#333" stroke-width="1.1"/><rect x="631" y="824.5" width="7" height="3.5" fill="#333"/><path d="M646 823 h5 l-2.5 2.5z" fill="#555"/><path d="M664 816 L681 832 M681 816 L664 832" stroke="#333" stroke-width="1"/><path d="M692 831.5 H704 M692 831.5 L701 818.5" stroke="#333" stroke-width="1" fill="none"/><rect x="696.5" y="823.5" width="2.5" height="2.5" fill="#333"/><path d="M714 823 h5 l-2.5 2.5z" fill="#555"/></svg></div>
<div class="t" style="left:733px;top:817px;color:#333">跨类型选择</div>
<div class="t" style="left:809px;top:817px;color:#333">折线选择</div>
<div class="t" style="left:870px;top:817px;color:#222">CAD图亮度：100%</div>
<div class="a" style="left:985px;top:817px"><svg width="80" height="15" viewBox="985 817 80 15"><circle cx="992" cy="824" r="5.5" fill="#fff" stroke="#666" stroke-width="1"/><path d="M989.5 824 h5" stroke="#444" stroke-width="1.4"/><path d="M1003 823.5 H1034" stroke="#c8c8c8" stroke-width="1.2"/><circle cx="1056" cy="824" r="5.5" fill="#fff" stroke="#666" stroke-width="1"/><path d="M1053.5 824 h5 M1056 821.5 v5" stroke="#444" stroke-width="1.4"/></svg></div>
<div class="a" style="left:1034px;top:813px;width:12px;height:21px;background:#0078d7"></div>
<div class="t" style="left:1069px;top:817px;color:#222">指定第一点</div>
</body></html>
